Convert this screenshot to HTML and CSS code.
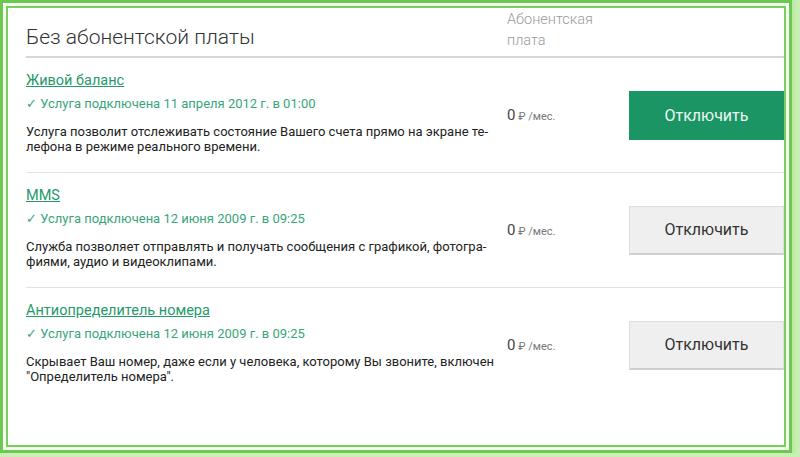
FILE: index.html
```html
<!DOCTYPE html>
<html lang="ru">
<head>
    <meta charset="UTF-8">
    <meta name="viewport" content="width=device-width, initial-scale=1.0">
    <title>Без абонентской платы</title>
    <link rel="stylesheet" href="styles.css">
</head>
<body>
    <div class="frame">
        <div class="panel">
            <div class="head">
                <h1 class="title">Без абонентской платы</h1>
                <div class="head-fee">Абонентская<br>плата</div>
                <div></div>
            </div>

            <div class="service">
                <div class="info">
                    <a class="name" href="#">Живой баланс</a>
                    <div class="status">&#10003; Услуга подключена 11 апреля 2012 г. в 01:00</div>
                    <p class="desc">Услуга позволит отслеживать состояние Вашего счета прямо на экране те-<br>лефона в режиме реального времени.</p>
                </div>
                <div class="fee"><span class="sum">0</span> ₽ /мес.</div>
                <button class="btn btn-green">Отключить</button>
            </div>

            <div class="service">
                <div class="info">
                    <a class="name" href="#">MMS</a>
                    <div class="status">&#10003; Услуга подключена 12 июня 2009 г. в 09:25</div>
                    <p class="desc">Служба позволяет отправлять и получать сообщения с графикой, фотогра-<br>фиями, аудио и видеоклипами.</p>
                </div>
                <div class="fee"><span class="sum">0</span> ₽ /мес.</div>
                <button class="btn">Отключить</button>
            </div>

            <div class="service">
                <div class="info">
                    <a class="name" href="#">Антиопределитель номера</a>
                    <div class="status">&#10003; Услуга подключена 12 июня 2009 г. в 09:25</div>
                    <p class="desc">Скрывает Ваш номер, даже если у человека, которому Вы звоните, включен<br>"Определитель номера".</p>
                </div>
                <div class="fee"><span class="sum">0</span> ₽ /мес.</div>
                <button class="btn">Отключить</button>
            </div>
        </div>
    </div>
</body>
</html>
```

FILE: styles.css
```css
body {
    margin: 0;
    background: #c9efb4;
    font-family: Roboto, "Liberation Sans", sans-serif;
    color: #222;
}
.frame {
    box-sizing: border-box;
    width: 792px;
    height: 453px;
    border: 3px solid #6cc853;
    padding: 3px;
    background: #f4fcef;
    box-shadow: 0 0 4px 2px #b5e99a;
}
.panel {
    box-sizing: border-box;
    height: 100%;
    border: 2px solid #78cf5c;
    background: #fff;
    padding-left: 18px;
}
.head,
.service {
    display: grid;
    grid-template-columns: 1fr 122px 155px;
}
.head {
    height: 48px;
    border-bottom: 2px solid #d6d6d6;
}
.title {
    align-self: end;
    margin: 0;
    padding-bottom: 6px;
    font-size: 21px;
    font-weight: 300;
    line-height: 26px;
    color: #333;
}
.head-fee {
    padding-top: 1px;
    font-size: 14.5px;
    font-weight: 300;
    line-height: 21px;
    color: #9a9a9a;
}
.service {
    align-items: center;
    border-bottom: 1px solid #e2e2e2;
}
.service:last-child {
    border-bottom: none;
}
.info {
    padding: 14px 0 18px;
    line-height: 18px;
}
.name {
    display: inline-block;
    font-size: 14.5px;
    line-height: 18px;
    vertical-align: top;
    color: #26996c;
}
.status {
    margin-top: 6px;
    font-size: 13px;
    line-height: 16px;
    color: #38a57b;
}
.desc {
    margin: 12px 0 0;
    font-size: 13px;
    line-height: 15px;
    white-space: nowrap;
    color: #222;
}
.fee {
    font-size: 11px;
    color: #777;
}
.sum {
    font-size: 15px;
    color: #444;
}
.btn {
    height: 49px;
    border: 1px solid #dedede;
    border-bottom: 2px solid #cfcfcf;
    background: #efefef;
    color: #333;
    font-family: inherit;
    font-size: 16px;
    cursor: pointer;
}
.btn-green {
    border: none;
    background: #1b9564;
    color: #eef8f2;
}
```
